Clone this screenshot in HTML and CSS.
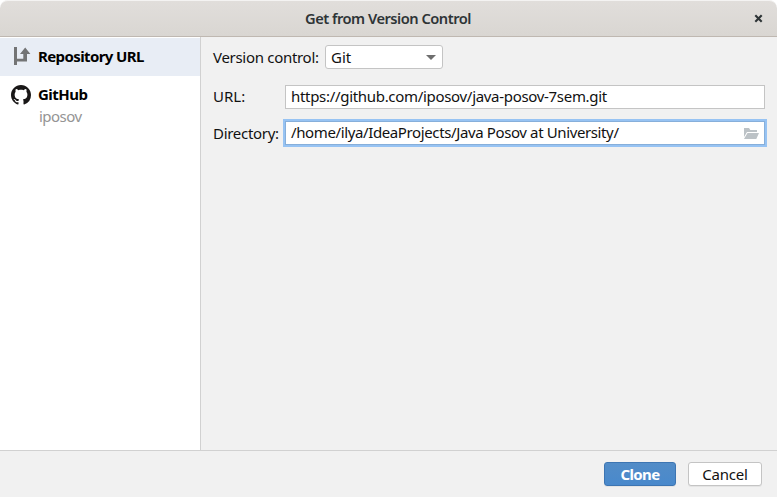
FILE: index.html
```html
<!DOCTYPE html>
<html lang="en">
<head>
<meta charset="utf-8">
<title>Get from Version Control</title>
<link rel="stylesheet" href="styles.css">
</head>
<body>
<div class="dialog">
  <header class="titlebar">
    <h1 class="title">Get from Version Control</h1>
    <button class="close" aria-label="Close"><svg width="9" height="9" viewBox="0 0 9 9"><path d="M1.3 1.3 7.7 7.7M7.7 1.3 1.3 7.7" stroke="#2e3436" stroke-width="2.1"/></svg></button>
  </header>
  <main class="content">
    <nav class="sidebar">
      <div class="item selected">
        <svg class="icon" width="20" height="20" viewBox="0 0 20 20"><path d="M3 0h3v11.8h6.3V7H9l5.2-6.5L19.4 7H16v7.5H6V18H3z" fill="#737475"/></svg>
        <span class="name repo">Repository URL</span>
      </div>
      <div class="item account">
        <svg class="icon" width="20" height="20" viewBox="0 0 16 16"><path fill="#191717" d="M8 0C3.58 0 0 3.58 0 8c0 3.54 2.29 6.53 5.47 7.59.4.07.55-.17.55-.38 0-.19-.01-.82-.01-1.49-2.01.37-2.53-.49-2.69-.94-.09-.23-.48-.94-.82-1.13-.28-.15-.68-.52-.01-.53.63-.01 1.08.58 1.23.82.72 1.21 1.87.87 2.33.66.07-.52.28-.87.51-1.07-1.78-.2-3.64-.89-3.64-3.95 0-.87.31-1.59.82-2.15-.08-.2-.36-1.02.08-2.12 0 0 .67-.21 2.2.82.64-.18 1.32-.27 2-.27s1.36.09 2 .27c1.53-1.04 2.2-.82 2.2-.82.44 1.1.16 1.92.08 2.12.51.56.82 1.27.82 2.15 0 3.07-1.87 3.75-3.65 3.95.29.25.54.73.54 1.48 0 1.07-.01 1.93-.01 2.2 0 .21.15.46.55.38A8.01 8.01 0 0 0 16 8c0-4.42-3.58-8-8-8z"/></svg>
        <div><div class="name hub">GitHub</div><div class="user">iposov</div></div>
      </div>
    </nav>
    <section class="form">
      <div class="row vcs">
        <span class="label">Version control:</span>
        <div class="combo"><span>Git</span><svg width="10" height="5" viewBox="0 0 10 5"><path d="M0 0h10L5 5z" fill="#6e6e6e"/></svg></div>
      </div>
      <div class="row">
        <span class="label fixed raised short">URL:</span>
        <div class="field"><span class="raised url">https://github.com/iposov/java-posov-7sem.git</span></div>
      </div>
      <div class="row dir">
        <span class="label fixed">Directory:</span>
        <div class="field focused"><span class="raised path">/home/ilya/IdeaProjects/Java Posov at University/</span>
          <svg width="15" height="11" viewBox="0 0 15 11"><path d="M0 0h5l1.3 2H13v2H3L0 9zM3.5 5H15l-2.7 6H0z" fill="#bcc2c6"/></svg>
        </div>
      </div>
    </section>
  </main>
  <footer class="footer">
    <button class="button primary">Clone</button>
    <button class="button">Cancel</button>
  </footer>
</div>
</body>
</html>
```
FILE: styles.css
```css
* { box-sizing: border-box; }
body { margin: 0; background: #fff; font: 15px/20px "Noto Sans", sans-serif; color: #111; }
button { font: inherit; padding: 0; margin: 0; }
.dialog { width: 777px; height: 497px; display: flex; flex-direction: column; background: #f1f1f1; border-radius: 8px 8px 0 0; overflow: hidden; }
.titlebar { height: 37px; flex: none; display: grid; grid-template-columns: 40px 1fr 40px; align-items: center; background: linear-gradient(#e1dedb, #d9d6d2); border-top: 1px solid #f4f3f2; border-bottom: 1px solid #bfb8b1; border-radius: 8px 8px 0 0; }
.title { grid-column: 2; margin: 0; padding: 0 1px 2px 0; text-align: center; font-size: 14.67px; font-weight: 600; letter-spacing: -0.5px; color: #2e3436; }
.close { width: 9px; height: 9px; margin: 0 0 1px 17px; border: 0; background: none; display: flex; }
.content { flex: 1; display: flex; min-height: 0; }
.sidebar { width: 201px; background: #fff; border-right: 1px solid #d1d1d1; padding-top: 1px; }
.item { display: flex; height: 38px; padding-left: 11px; gap: 7px; align-items: center; font-weight: 700; color: #000; }
.icon { flex: none; }
.repo { letter-spacing: -0.6px; padding-bottom: 2px; }
.account { height: 60px; align-items: flex-start; padding-top: 8px; }
.account .icon { margin-top: 1px; }
.hub { letter-spacing: -0.5px; }
.selected { background: #e8edf5; }
.user { font-weight: 400; color: #949494; margin: 2px 0 0 1px; letter-spacing: -0.55px; }
.form { flex: 1; padding: 8px 12px 0; }
.row { display: flex; align-items: center; height: 24px; margin-bottom: 12px; }
.vcs { margin-bottom: 16px; gap: 6px; }
.label { white-space: nowrap; letter-spacing: -0.3px; }
.vcs .label { width: 106px; }
.fixed { width: 72px; flex: none; }
.short { letter-spacing: 0; }
.raised { padding-bottom: 2px; }
.url { letter-spacing: -0.31px; }
.path { letter-spacing: -0.38px; }
.combo { width: 118px; height: 24px; border: 1px solid #c4c4c4; border-radius: 3px; background: #fff; display: flex; align-items: center; justify-content: space-between; padding: 0 6px 0 5px; }
.field { flex: 1; height: 24px; border: 1px solid #c4c4c4; background: #fff; display: flex; align-items: center; justify-content: space-between; padding: 0 5px; white-space: nowrap; }
.focused { border-color: #87afda; box-shadow: 0 0 0 2px #97c3f3; }
.footer { height: 47px; flex: none; border-top: 1px solid #d1d1d1; display: flex; justify-content: flex-end; gap: 12px; padding: 11px 15px 0 0; }
.button { width: 74px; height: 24px; border: 1px solid #c4c4c4; border-radius: 3px; background: #fff; line-height: 22px; box-shadow: 0 1px 0 #e4e4e4; color: #111; letter-spacing: -0.2px; }
.primary { width: 72px; background: linear-gradient(#528cc7, #4989cc); border-color: #3d75b2; color: #fff; font-weight: 700; letter-spacing: -0.6px; }
```
